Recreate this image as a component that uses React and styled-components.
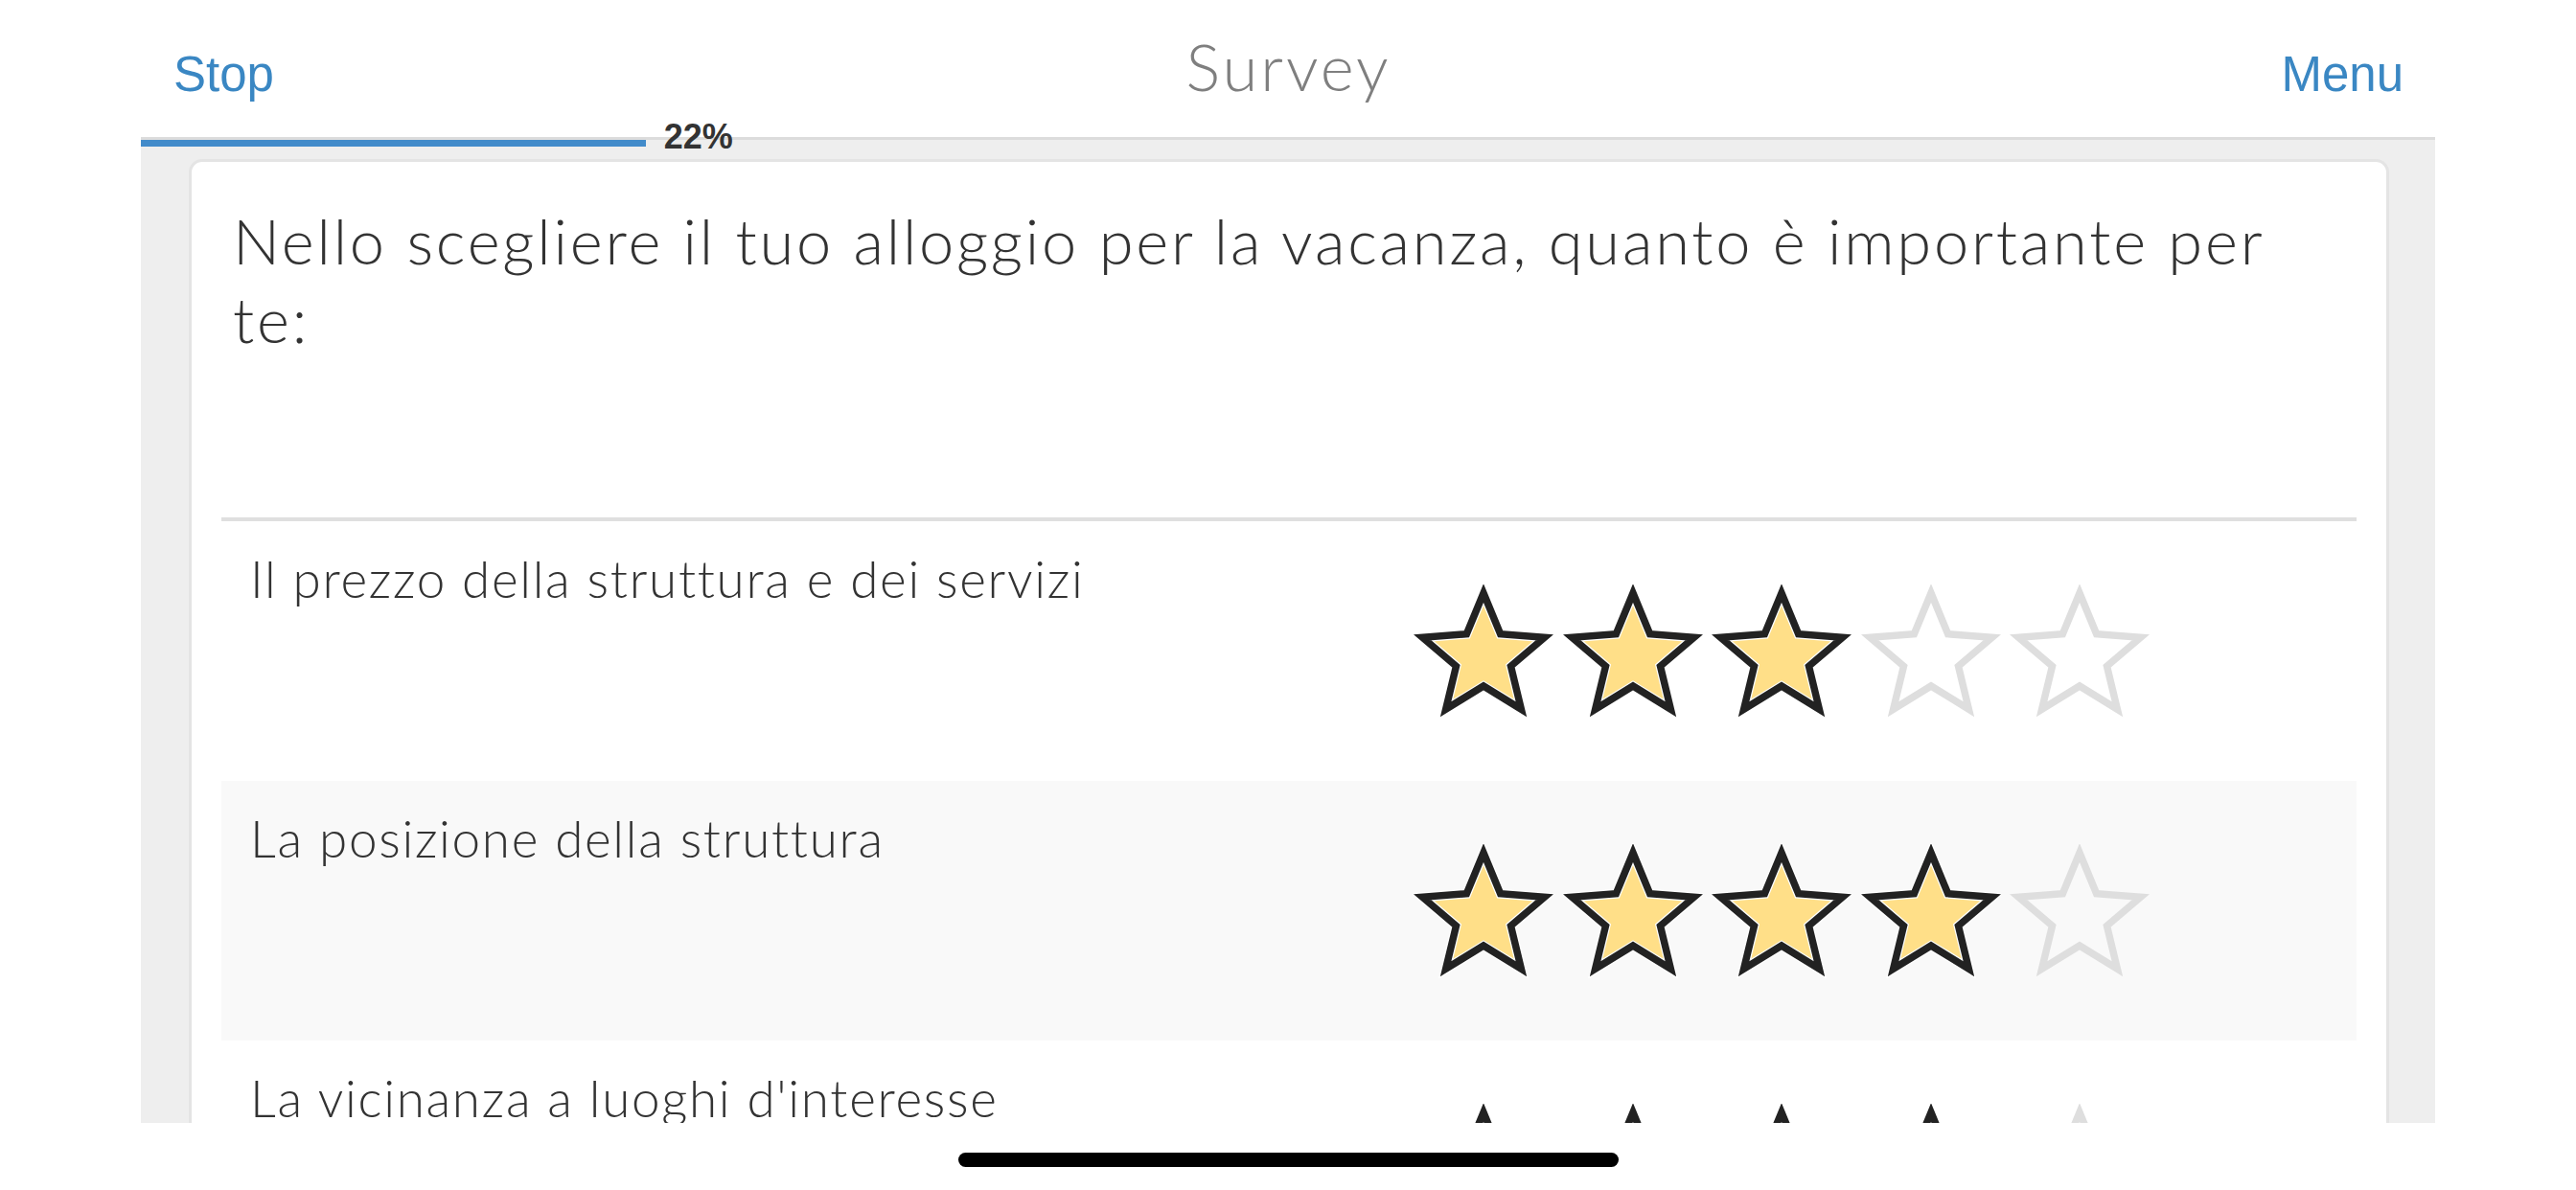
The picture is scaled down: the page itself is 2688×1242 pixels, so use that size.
import React from "react";
import styled, { createGlobalStyle } from "styled-components";

const GlobalStyle = createGlobalStyle`
  html, body {
    margin: 0;
    padding: 0;
    background: #ffffff;
  }
  body {
    font-family: "Lato", "Open Sans", sans-serif;
    color: #333333;
  }
  *, *::before, *::after {
    box-sizing: border-box;
  }
`;

const Screen = styled.div`
  width: 2688px;
  height: 1242px;
  display: flex;
  flex-direction: column;
  overflow: hidden;
  background: #ffffff;
`;

const Viewport = styled.div`
  width: 2394px;
  height: 1172px;
  margin: 0 auto;
  display: flex;
  flex-direction: column;
  overflow: hidden;
`;

const Header = styled.header`
  height: 143px;
  flex-shrink: 0;
  display: grid;
  grid-template-columns: 1fr auto 1fr;
  align-items: baseline;
  padding: 29px 33px 0 34px;
`;

const NavLink = styled.a`
  justify-self: ${(p) => (p.$end ? "end" : "start")};
  font-family: "Liberation Sans", Arial, sans-serif;
  font-size: 51px;
  line-height: 1.2;
  color: #3a87c3;
  text-decoration: none;
  cursor: pointer;
`;

const Title = styled.h1`
  margin: 0;
  font-family: "Lato", "Open Sans", sans-serif;
  font-weight: 300;
  font-size: 67px;
  line-height: 1.2;
  letter-spacing: 3px;
  color: #7f7f7f;
`;

const Body = styled.main`
  flex: 1;
  min-height: 0;
  display: flex;
  flex-direction: column;
  background: #eeeeee;
  border-top: 3px solid #dcdcdc;
`;

const ProgressRow = styled.div`
  position: relative;
  height: 20px;
  flex-shrink: 0;
`;

const ProgressFill = styled.div`
  height: 7px;
  background: #428bca;
`;

const ProgressLabel = styled.span`
  position: absolute;
  top: -21px;
  font-family: "Liberation Sans", Arial, sans-serif;
  font-weight: 700;
  font-size: 36px;
  line-height: 1;
  color: #333333;
`;

const CardWrap = styled.div`
  flex: 1;
  min-height: 0;
  padding: 0 48px 0 50px;
`;

const Card = styled.section`
  height: 100%;
  background: #ffffff;
  border: 3px solid #e4e4e4;
  border-bottom: none;
  border-radius: 14px 14px 0 0;
  padding: 0 31px;
  overflow: hidden;
`;

const Question = styled.h2`
  margin: 0;
  height: 371px;
  padding: 41px 12px 0;
  font-family: "Lato", "Open Sans", sans-serif;
  font-weight: 300;
  font-size: 65px;
  line-height: 82px;
  letter-spacing: 2.8px;
  color: #333333;
`;

const RatingList = styled.div`
  border-top: 4px solid #dfdfdf;
`;

const Row = styled.div`
  height: 271px;
  display: grid;
  grid-template-columns: 1fr auto;
  padding: 0 30px;
  background: ${(p) => (p.$shaded ? "#f9f9f9" : "transparent")};
`;

const Label = styled.div`
  align-self: start;
  padding-top: 28px;
  font-family: "Lato", "Open Sans", sans-serif;
  font-weight: 300;
  font-size: 53px;
  line-height: 1.2;
  letter-spacing: 1.7px;
  color: #333333;
`;

const Stars = styled.div`
  align-self: center;
  display: flex;
  gap: 9.5px;
  margin-right: 186px;
`;

const StarSvg = styled.svg`
  display: block;
  width: 146px;
  height: 140px;
  flex-shrink: 0;
`;

const HomeStrip = styled.div`
  flex: 1;
  display: flex;
  justify-content: center;
  padding-top: 31px;
`;

const HomeIndicator = styled.div`
  width: 689px;
  height: 15px;
  border-radius: 8px;
  background: #000000;
`;

const starPoints = (() => {
  const cx = 73;
  const cy = 76;
  const R = 67;
  const r = 30;
  const pts = [];
  for (let i = 0; i < 10; i += 1) {
    const a = ((-90 + i * 36) * Math.PI) / 180;
    const rad = i % 2 === 0 ? R : r;
    pts.push(`${(cx + rad * Math.cos(a)).toFixed(2)},${(cy + rad * Math.sin(a)).toFixed(2)}`);
  }
  return pts.join(" ");
})();

function Star({ filled }) {
  return (
    <StarSvg viewBox="0 0 146 140" aria-hidden="true">
      {filled ? (
        <>
          <polygon
            points={starPoints}
            fill="#ffdf88"
            stroke="#ffffff"
            strokeWidth="10"
            strokeLinejoin="miter"
            strokeMiterlimit="10"
          />
          <polygon
            points={starPoints}
            fill="none"
            stroke="#222222"
            strokeWidth="7.5"
            strokeLinejoin="miter"
            strokeMiterlimit="10"
          />
        </>
      ) : (
        <polygon
          points={starPoints}
          fill="none"
          stroke="#dedede"
          strokeWidth="7.5"
          strokeLinejoin="miter"
          strokeMiterlimit="10"
        />
      )}
    </StarSvg>
  );
}

function Rating({ value, max = 5 }) {
  return (
    <Stars role="img" aria-label={`${value} / ${max}`}>
      {Array.from({ length: max }, (_, i) => (
        <Star key={i} filled={i < value} />
      ))}
    </Stars>
  );
}

const progress = 22;

const items = [
  { label: "Il prezzo della struttura e dei servizi", value: 3 },
  { label: "La posizione della struttura", value: 4 },
  { label: "La vicinanza a luoghi d'interesse", value: 4 },
];

export default function App() {
  return (
    <>
      <GlobalStyle />
      <Screen>
        <Viewport>
          <Header>
            <NavLink>Stop</NavLink>
            <Title>Survey</Title>
            <NavLink $end>Menu</NavLink>
          </Header>
          <Body>
            <ProgressRow>
              <ProgressFill style={{ width: `${progress}%` }} />
              <ProgressLabel style={{ left: `calc(${progress}% + 19px)` }}>
                {progress}%
              </ProgressLabel>
            </ProgressRow>
            <CardWrap>
              <Card>
                <Question>
                  Nello scegliere il tuo alloggio per la vacanza, quanto è importante per te:
                </Question>
                <RatingList>
                  {items.map((item, i) => (
                    <Row key={item.label} $shaded={i % 2 === 1}>
                      <Label>{item.label}</Label>
                      <Rating value={item.value} />
                    </Row>
                  ))}
                </RatingList>
              </Card>
            </CardWrap>
          </Body>
        </Viewport>
        <HomeStrip>
          <HomeIndicator />
        </HomeStrip>
      </Screen>
    </>
  );
}
